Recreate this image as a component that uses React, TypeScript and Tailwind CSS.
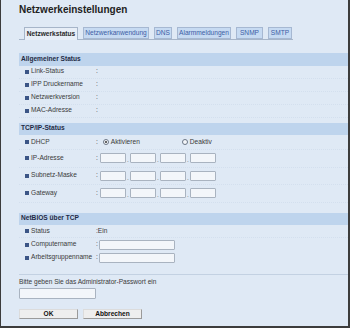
import React from "react";

const FONT = "font-['Liberation_Sans',Arial,sans-serif]";

function Bullet() {
  return <span className="inline-block w-[4px] h-[4px] bg-[#3b5586] mr-[2px]" />;
}

function Label({ text }: { text: string }) {
  return (
    <div className="flex items-center w-[77px] pl-[6px] text-[#3a3a3a]">
      <Bullet />
      <span>{text}</span>
    </div>
  );
}

function InfoRow({ text, value }: { text: string; value?: string }) {
  return (
    <div className="flex items-center h-[13px] border-b border-dotted border-[#d3dfee]">
      <Label text={text} />
      <span className="text-[#3a3a3a]">:{value ?? ""}</span>
    </div>
  );
}

function Box({ w = 26 }: { w?: number }) {
  return (
    <div
      className="h-[10px] bg-[#f3f6fa] border border-[#a9b3c0] rounded-[1px]"
      style={{ width: w }}
    />
  );
}

function IpRow({ text }: { text: string }) {
  return (
    <div className="flex items-center h-[17.5px] border-b border-dotted border-[#d3dfee]">
      <Label text={text} />
      <span className="text-[#3a3a3a] mr-[2px]">:</span>
      <div className="flex items-end">
        <Box />
        <span className="w-[4px] text-center leading-[6px] text-[#777]">.</span>
        <Box />
        <span className="w-[4px] text-center leading-[6px] text-[#777]">.</span>
        <Box />
        <span className="w-[4px] text-center leading-[6px] text-[#777]">.</span>
        <Box />
      </div>
    </div>
  );
}

function TextRow({ text }: { text: string }) {
  return (
    <div className="flex items-center h-[13px]">
      <Label text={text} />
      <span className="text-[#3a3a3a] mr-[1px]">:</span>
      <div className="h-[10px] w-[76px] bg-[#f3f6fa] border border-[#a9b3c0] rounded-[1px]" />
    </div>
  );
}

function Header({ text }: { text: string }) {
  return (
    <div className="h-[12.5px] bg-[#bed4ed] flex items-center pl-[2px] font-bold text-[#1f2b45]">
      {text}
    </div>
  );
}

function Radio({ checked }: { checked?: boolean }) {
  return (
    <span className="inline-flex items-center justify-center w-[6px] h-[6px] rounded-full border border-[#6b7686] bg-[#f5f7fa] mr-[2px]">
      {checked && <span className="w-[2px] h-[2px] rounded-full bg-[#333]" />}
    </span>
  );
}

export default function App() {
  const tabs: { label: string; w: number; active?: boolean }[] = [
    { label: "Netzwerkstatus", w: 54, active: true },
    { label: "Netzwerkanwendung", w: 66 },
    { label: "DNS", w: 18 },
    { label: "Alarmmeldungen", w: 54 },
    { label: "SNMP", w: 27 },
    { label: "SMTP", w: 24 },
  ];
  return (
    <div
      className={`${FONT} w-[350px] h-[328px] bg-[#dfe9f5] border-l border-r-2 border-b-2 border-[#3c3c3c] text-[6.6px] leading-none overflow-hidden`}
    >
      <div className="pl-[18px]">
        <div className="pt-[4px] h-[17px] text-[10px] font-bold text-[#222] leading-[12px]">
          Netzwerkeinstellungen
        </div>
        <div className="mt-[10px] w-[274px] h-[13px] border-b border-[#a6b5c9] flex items-end pl-[5px] gap-[5px]">
          {tabs.map((t) => (
            <div
              key={t.label}
              className={
                t.active
                  ? "h-[13px] bg-[#e7eef7] border border-b-0 border-[#a6b5c9] flex items-center justify-center font-bold text-[#2a2a2a] -mb-[1px]"
                  : "h-[12px] bg-[#c6daf2] border border-[#a6b8d2] flex items-center justify-center text-[#3d5da5]"
              }
              style={{ width: t.w }}
            >
              {t.label}
            </div>
          ))}
        </div>

        <div className="mt-[13px]">
          <Header text="Allgemeiner Status" />
          <InfoRow text="Link-Status" />
          <InfoRow text="IPP Druckername" />
          <InfoRow text="Netzwerkversion" />
          <InfoRow text="MAC-Adresse" />
        </div>

        <div className="mt-[5px]">
          <Header text="TCP/IP-Status" />
          <div className="flex items-center h-[15px] border-b border-dotted border-[#d3dfee]">
            <Label text="DHCP" />
            <span className="text-[#3a3a3a] mr-[5px]">:</span>
            <div className="flex items-center w-[79px] text-[#3a3a3a]">
              <Radio checked />
              <span>Aktivieren</span>
            </div>
            <div className="flex items-center text-[#3a3a3a]">
              <Radio />
              <span>Deaktiv</span>
            </div>
          </div>
          <IpRow text="IP-Adresse" />
          <IpRow text="Subnetz-Maske" />
          <IpRow text="Gateway" />
        </div>

        <div className="mt-[10px]">
          <Header text="NetBIOS über TCP" />
          <InfoRow text="Status" value="Ein" />
          <TextRow text="Computername" />
          <TextRow text="Arbeitsgruppenname" />
        </div>

        <div className="mt-[10px] border-t border-[#c3d1e2] pt-[4px]">
          <div className="text-[#3a3a3a] h-[8px]">Bitte geben Sie das Administrator-Passwort ein</div>
          <div className="mt-[1px] h-[11px] w-[77px] bg-[#f3f6fa] border border-[#a9b3c0] rounded-[1px]" />
          <div className="mt-[10px] flex gap-[5px]">
            <button className="w-[59px] h-[10px] bg-[#eeeeee] border border-[#9a9a9a] border-t-[#dcdcdc] border-l-[#dcdcdc] font-bold text-[#111] flex items-center justify-center">
              OK
            </button>
            <button className="w-[59px] h-[10px] bg-[#eeeeee] border border-[#9a9a9a] border-t-[#dcdcdc] border-l-[#dcdcdc] font-bold text-[#111] flex items-center justify-center">
              Abbrechen
            </button>
          </div>
        </div>
      </div>
    </div>
  );
}
